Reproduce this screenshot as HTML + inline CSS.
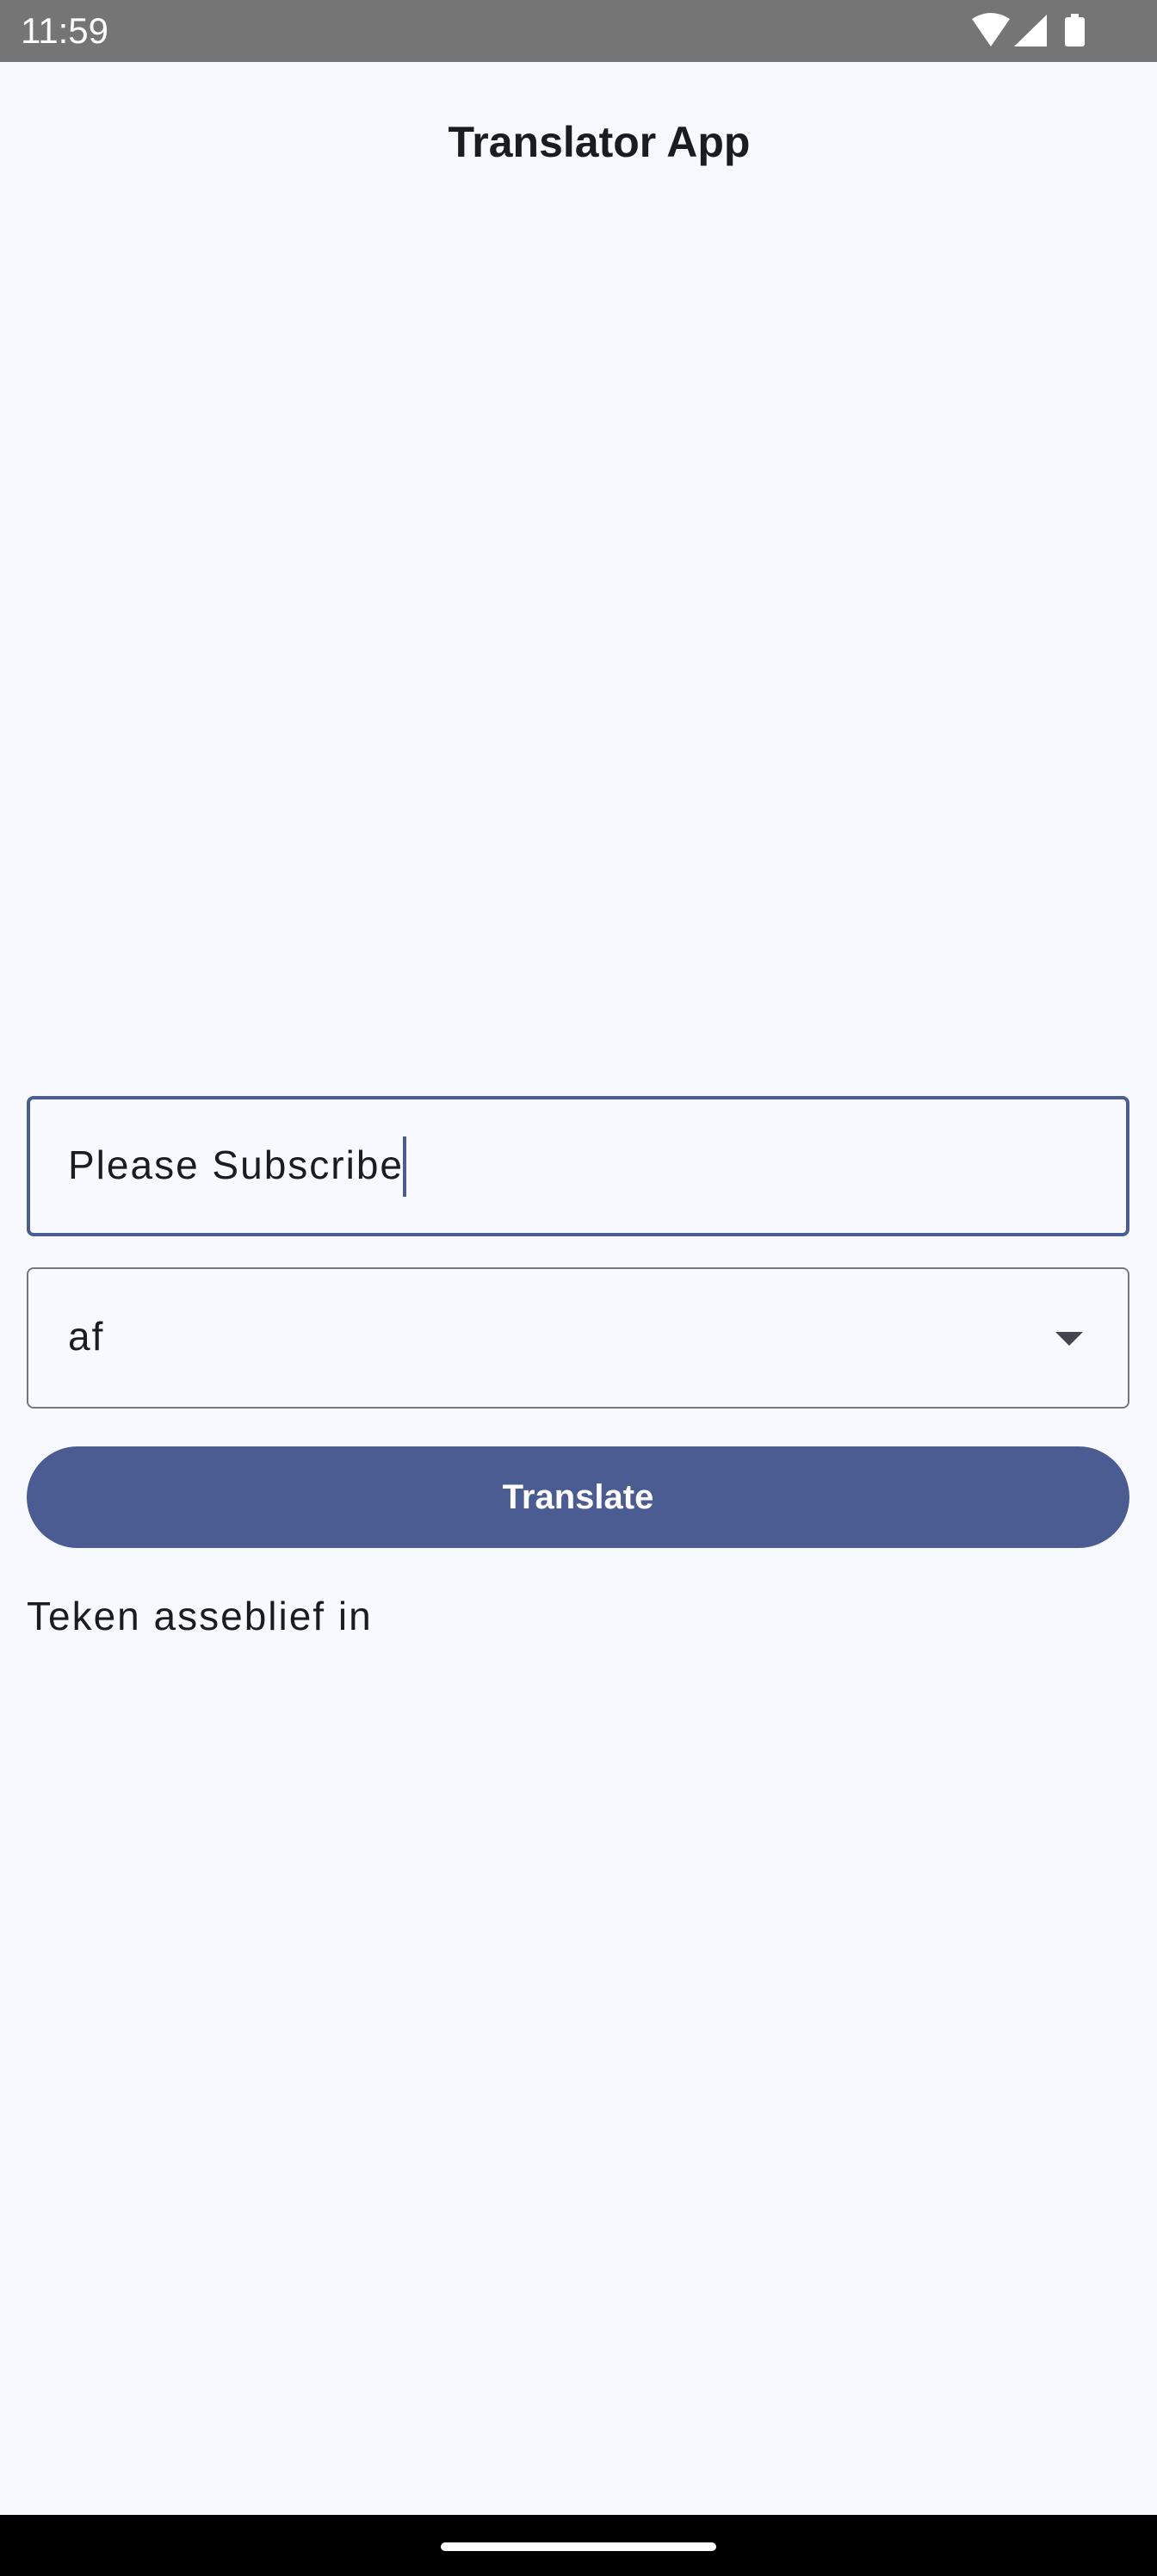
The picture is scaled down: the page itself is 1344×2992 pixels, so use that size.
<!DOCTYPE html>
<html><head><meta charset="utf-8"><style>
*{margin:0;padding:0;box-sizing:border-box}
body{margin:0;background:#f8f9ff;font-family:"Liberation Sans",sans-serif}
#wrap{position:relative;width:1344px;height:2992px;overflow:hidden;background:#f8f9ff}
.status{position:absolute;left:0;top:0;width:1344px;height:72px;background:#757575}
.time{position:absolute;left:24px;top:12px;color:#fff;font-size:42px}
.title{position:absolute;left:24px;width:1344px;top:136px;text-align:center;font-size:50px;font-weight:bold;color:#1a1c22}
.field{position:absolute;left:31px;width:1281px;border-radius:8px}
.f1{top:1273px;height:163px;border:4px solid #4a5c92}
.f2{top:1472px;height:164px;border:2px solid #74777f}
.txt{position:absolute;left:79px;font-size:46px;color:#1a1c22;letter-spacing:2px}
.caret{position:absolute;left:468px;top:1320px;width:4px;height:70px;background:#4a5c92}
.btn{position:absolute;left:31px;top:1680px;width:1281px;height:118px;border-radius:59px;background:#4a5c92;color:#fff;font-size:40px;font-weight:bold;text-align:center;line-height:118px}
.nav{position:absolute;left:0;top:2921px;width:1344px;height:71px;background:#000}
.handle{position:absolute;left:512px;top:32px;width:320px;height:10px;border-radius:5px;background:#fff}
</style></head><body><div id="wrap">
<div class="status"><div class="time">11:59</div>
<svg style="position:absolute;left:1125px;top:14px" width="140" height="44" viewBox="0 0 140 44">
<path d="M4 8 Q26 -6 48 8 L26 40 Z" fill="#fff"/>
<path d="M53 40 L91 3 L91 40 Z" fill="#fff"/>
<rect x="112" y="6" width="23" height="34" rx="3" fill="#fff"/><rect x="119" y="2" width="9" height="5" fill="#fff"/>
</svg></div>
<div class="title">Translator App</div>
<div class="field f1"></div>
<div class="txt" style="top:1326px">Please Subscribe</div>
<div class="caret"></div>
<div class="field f2"></div>
<div class="txt" style="top:1525px">af</div>
<svg style="position:absolute;left:1226px;top:1547px" width="32" height="16"><path d="M0 0 L32 0 L16 16 Z" fill="#44464f"/></svg>
<div class="btn">Translate</div>
<div class="txt" style="left:31px;top:1850px">Teken asseblief in</div>
<div class="nav"><div class="handle"></div></div>
</div></body></html>
